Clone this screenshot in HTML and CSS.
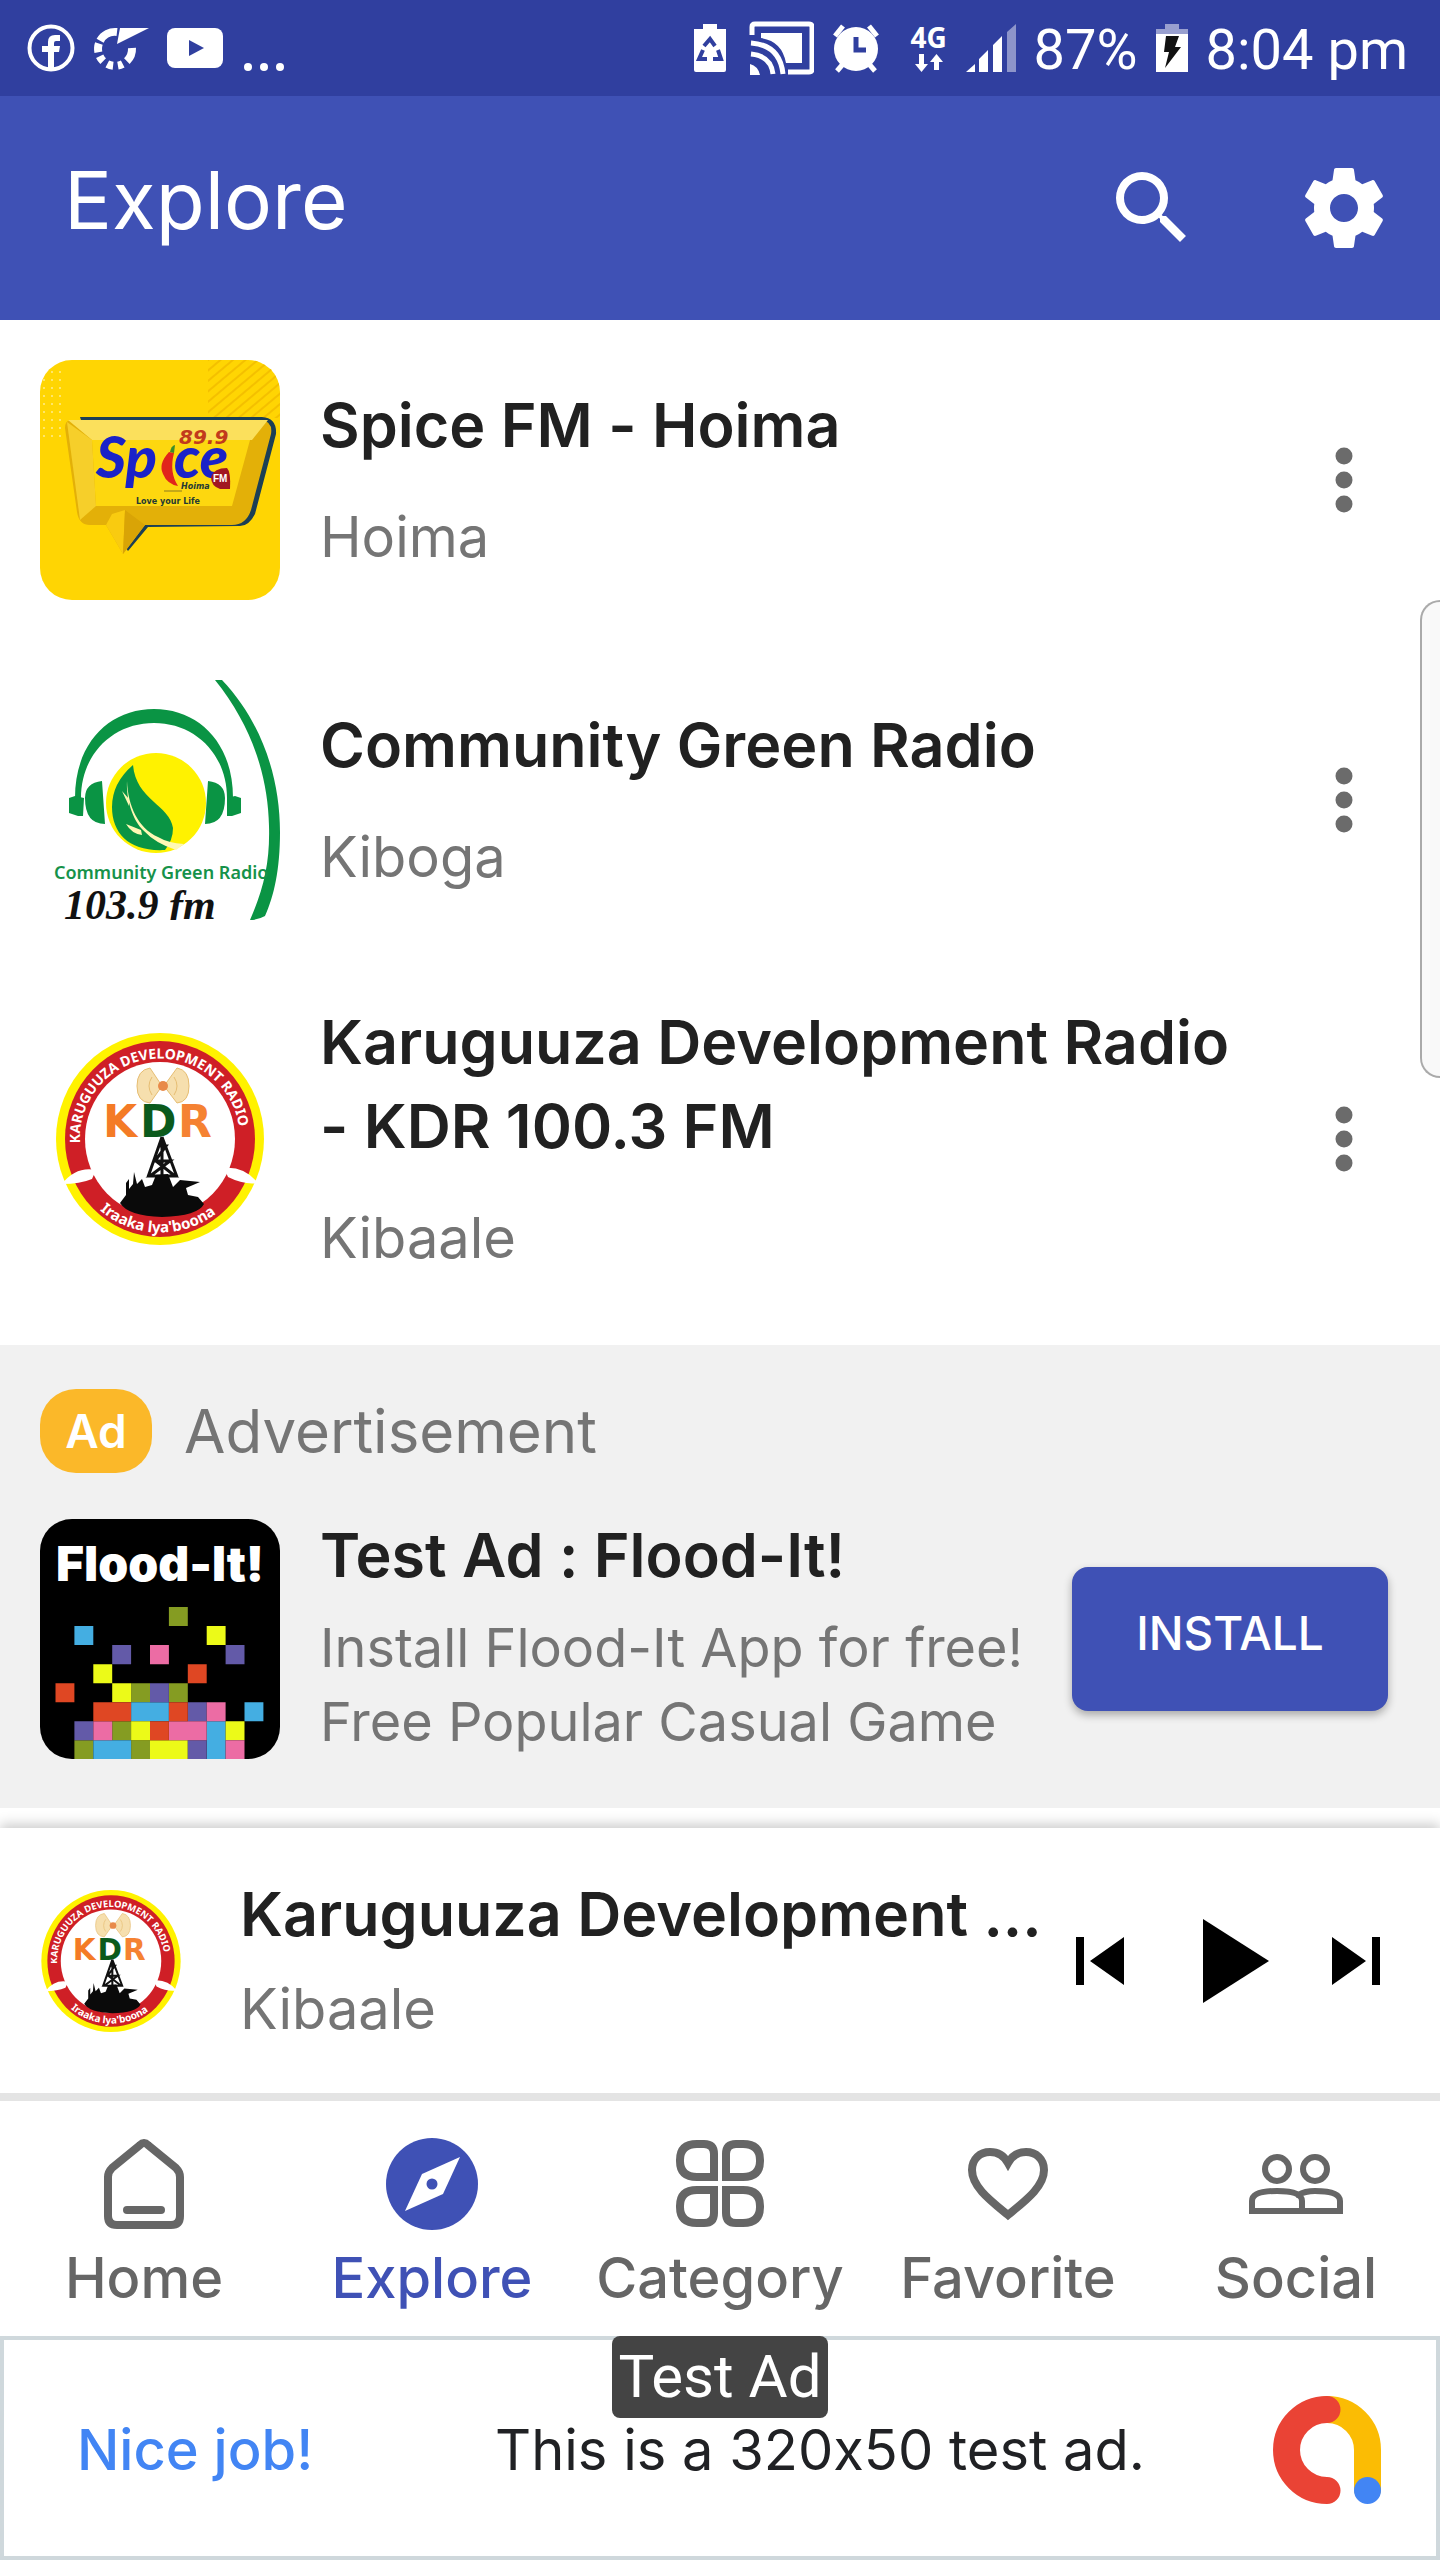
FILE: index.html
```html
<!DOCTYPE html>
<html lang="en">
<head>
<meta charset="utf-8">
<meta name="viewport" content="width=device-width, initial-scale=1">
<title>Explore</title>
<link rel="stylesheet" href="styles.css">
</head>
<body>
<svg class="defs" aria-hidden="true">
  <symbol id="more" viewBox="0 0 96 96"><g fill="#6b6b6b"><circle cx="48" cy="24" r="8.500"/><circle cx="48" cy="48" r="8.500"/><circle cx="48" cy="72" r="8.500"/></g></symbol>
  <symbol id="kdr" viewBox="0 0 240 240">
    <ellipse cx="120" cy="120" rx="104" ry="106" fill="#fff200"/>
    <ellipse cx="120" cy="120" rx="95" ry="98" fill="#cf1f26"/>
    <ellipse cx="120" cy="120" rx="75" ry="77" fill="#fff"/>
    <path d="M22 165Q36 147 56 151L52 160Q40 165 22 165ZM218 164Q204 147 184 149L188 158Q204 166 218 164Z" fill="#fff"/>
    <path id="kdr-top" d="M40 124A80 80 0 1 1 190 158" fill="none"/>
    <path id="kdr-bottom" d="M54 186A93 93 0 0 0 188 184" fill="none"/>
    <text class="kdr-ring"><textPath href="#kdr-top">KARUGUUZA DEVELOPMENT RADIO</textPath></text>
    <text class="kdr-ring kdr-motto"><textPath href="#kdr-bottom" startOffset="8">Iraaka lya'boona</textPath></text>
    <g fill="#f6dfae" stroke="#e6bd72"><path d="M122 67L110 49Q97 51 97 67T110 84ZM124 67L137 49Q149 51 149 67T137 84Z"/><path d="M112 58Q106 67 112 76M134 58Q140 67 134 76" fill="none"/></g>
    <circle cx="123" cy="67" r="5" fill="#e88a4a"/>
    <text class="kdr-name" y="118"><tspan x="63" fill="#f47b26">K</tspan><tspan x="100" fill="#0b5a1c">D</tspan><tspan x="138" fill="#f58232">R</tspan></text>
    <path d="M122 118L108 158M122 118L137 158M119 127H126L115 142H130L110 157H135L116 142M122 120V160" fill="none" stroke="#111" stroke-width="3"/>
    <path d="M80 184L86 176V164L89 160V170L93 165L94 153L97 165L102 160L105 168L112 166L116 156L128 155L133 168L140 161L160 163L146 169L148 176L158 178L164 185Q158 197 122 198Q88 197 80 184Z" fill="#0a0a0a"/>
  </symbol>
</svg>

<div class="status">
  <div class="status-group">
    <svg width="48" height="48" viewBox="0 0 48 48"><circle cx="24" cy="24" r="21.500" fill="none" stroke="#fff" stroke-width="4"/><path d="M21 46V28H15V22H21V18Q21 11 28 11H33V17H29Q27 17 27 19V22H33L32 28H27V46Z" fill="#fff"/></svg>
    <svg width="56" height="48" viewBox="0 0 56 48"><path d="M30 4H56L24 20L27 4Z" fill="#fff"/><path d="M24 8A17 17 0 1 0 39 24" fill="none" stroke="#fff" stroke-width="8" stroke-dasharray="20 3 9 4 6 5 6 5 5 5"/></svg>
    <svg width="56" height="48" viewBox="0 0 56 48"><rect y="4" width="56" height="40" rx="8" fill="#fff"/><path d="M22 16L37 24L22 32Z" fill="#303f9f"/></svg>
    <svg width="48" height="48" viewBox="0 0 48 48"><g fill="#fff"><circle cx="7" cy="43" r="4"/><circle cx="23" cy="43" r="4"/><circle cx="39" cy="43" r="4"/></g></svg>
  </div>
  <div class="status-group">
    <svg width="32" height="48" viewBox="0 0 32 48"><path d="M9 0H23V5H32V46Q32 48 30 48H2Q0 48 0 46V5H9Z" fill="#fff"/><path d="M10 22L16 15L21 22M24 26L27 35H19M13 35H5L9 26" fill="none" stroke="#303f9f" stroke-width="4"/></svg>
    <svg width="70" height="54" viewBox="-6 0 70 54"><path d="M2 14V6Q2 3 5 3H59Q62 3 62 6V48Q62 51 59 51H38" fill="none" stroke="#fff" stroke-width="5"/><path d="M11 12H52V42H36Q32 20 11 17Z" fill="#fff"/><path d="M1 22Q30 24 33 53M1 33Q21 35 23 53" fill="none" stroke="#fff" stroke-width="5"/><path d="M0 43Q8 45 10 54H0Z" fill="#fff"/></svg>
    <svg width="48" height="50" viewBox="0 0 48 50"><circle cx="24" cy="26" r="22" fill="#fff"/><path d="M3 13L11 3M45 13L37 3M5 48L11 41M43 48L37 41" stroke="#fff" stroke-width="5"/><path d="M24 14V27H34" fill="none" stroke="#303f9f" stroke-width="5"/></svg>
    <div class="network"><span>4G</span><svg width="30" height="18" viewBox="0 0 30 18"><path d="M5 0H10V10H14L7.500 18L1 10H5ZM20 16H25V8H29L22.500 0L16 8H20Z" fill="#fff"/></svg></div>
    <svg width="50" height="48" viewBox="0 0 50 48"><path d="M0 48L9 40V48ZM13 35L22 26V48H13ZM27 21L36 12V48H27Z" fill="#fff"/><path d="M41 8L50 0V48H41Z" fill="#fff" opacity=".45"/></svg>
    <span class="clock">87%</span>
    <svg width="32" height="48" viewBox="0 0 32 48"><path d="M9 0H23V5H32V10H0V5H9Z" fill="#fff" opacity=".5"/><path d="M0 10H32V48H0Z" fill="#fff"/><path d="M10 12H23L19 23H25L9 44L13 28H8Z" fill="#111"/></svg>
    <span class="clock">8:04 pm</span>
  </div>
</div>

<header class="appbar">
  <h1>Explore</h1>
  <button class="icon-btn" aria-label="Search"><svg viewBox="0 0 24 24" fill="#fff"><path d="M15.500 14h-.79l-.28-.27A6.470 6.470 0 0 0 16 9.500 6.500 6.500 0 1 0 9.500 16c1.610 0 3.090-.59 4.230-1.570l.27.28v.79l5 4.990L20.490 19l-4.990-5zm-6 0C7.010 14 5 11.990 5 9.500S7.010 5 9.500 5 14 7.010 14 9.500 11.990 14 9.500 14z"/></svg></button>
  <button class="icon-btn" aria-label="Settings"><svg viewBox="0 0 24 24" fill="#fff"><path d="M19.430 12.980c.04-.32.07-.64.07-.98s-.03-.66-.07-.98l2.110-1.650c.19-.15.24-.42.12-.64l-2-3.460c-.12-.22-.39-.3-.61-.22l-2.490 1c-.52-.4-1.080-.73-1.690-.98l-.38-2.650C14.460 2.180 14.250 2 14 2h-4c-.25 0-.46.18-.49.42l-.38 2.650c-.61.25-1.170.59-1.690.98l-2.490-1c-.23-.09-.49 0-.61.22l-2 3.460c-.13.22-.07.49.12.64l2.110 1.650c-.04.32-.07.65-.07.98s.03.66.07.98l-2.110 1.650c-.19.15-.24.42-.12.64l2 3.460c.12.22.39.3.61.22l2.490-1c.52.4 1.080.73 1.690.98l.38 2.650c.03.24.24.42.49.42h4c.25 0 .46-.18.49-.42l.38-2.650c.61-.25 1.170-.59 1.690-.98l2.490 1c.23.09.49 0 .61-.22l2-3.460c.12-.22.07-.49-.12-.64l-2.110-1.650zM12 15.500c-1.930 0-3.500-1.570-3.500-3.500s1.570-3.500 3.500-3.500 3.500 1.570 3.500 3.500-1.570 3.500-3.500 3.500z"/></svg></button>
</header>

<main class="content">
  <ul class="stations">
    <li class="station">
      <svg class="cover" viewBox="0 0 240 240" role="img" aria-label="Spice FM logo">
        <defs>
          <pattern id="dots" width="8" height="8" patternUnits="userSpaceOnUse"><circle cx="4" cy="4" r="1" fill="#ffec8c"/></pattern>
          <pattern id="lines" width="8" height="8" patternUnits="userSpaceOnUse" patternTransform="rotate(-40)"><path d="M0 4H8" stroke="#f4c000" stroke-width="2"/></pattern>
        </defs>
        <path d="M0 0H240V240H0Z" fill="#ffd503"/>
        <path d="M0 8H24V80H0Z" fill="url(#dots)"/><path d="M168 0H240V58H168Z" fill="url(#lines)"/>
        <path d="M40 57H222Q237 58 236 74L215 154Q209 166 200 166L108 167L88 191L80 180Z" fill="#1c3f55"/>
        <path d="M30 60H222Q233 62 231 74L211 150Q206 165 192 165H105L83 194L66 165H50Q39 165 37 152L25 68Q25 61 30 60Z" fill="#e3b008"/>
        <path d="M28 60H228L212 80H52Z" fill="#fbe05c"/><path d="M27 62L52 80L56 146L40 160Z" fill="#f6cf2a"/>
        <path d="M52 80H210L192 146H56Z" fill="#fdd70f"/><path d="M66 165L72 154L85 150L83 194Z" fill="#f9cb10"/><path d="M85 150L105 165L83 194Z" fill="#d9a406"/>
        <text class="spice-name" x="56" y="118">Sp</text><text class="spice-name" x="134" y="118">ce</text>
        <path d="M129 92Q118 104 123 114Q127 124 138 126Q129 112 134 93Z" fill="#e1251b"/><path d="M130 92Q131 86 135 85L134 93Z" fill="#3c8c28"/>
        <text class="spice-freq" x="139" y="84">89.9</text>
        <path d="M171 117Q174 108 187 108Q191 112 190 129H180Q171 126 171 117Z" fill="#a11722"/>
        <text class="spice-fm" x="173" y="122">FM</text>
        <text class="spice-small spice-town" x="141" y="129">Hoima</text>
        <path d="M124 131H142" stroke="#8d7a20"/>
        <text class="spice-small" x="96" y="144">Love your Life</text>
      </svg>
      <div class="info"><h2>Spice FM - Hoima</h2><p>Hoima</p></div>
      <button class="icon-btn" aria-label="More options"><svg><use href="#more"/></svg></button>
    </li>
    <li class="station">
      <svg class="cover cover-square" viewBox="0 0 240 240" role="img" aria-label="Community Green Radio logo">
        <g fill="#0a9444">
          <path d="M35 118C35 62 70 29 114 29S193 62 193 118H187C187 74 155 43 114 43S41 74 41 118Z"/>
          <path d="M29 118L35 116L44 118L43 136H38L29 133ZM201 118L195 116L187 118V136H192L201 133Z"/>
          <path d="M62 101Q45 103 45 118Q45 144 65 144ZM168 101Q185 103 185 118Q185 144 165 144Z"/>
          <path d="M175 0H182C222 42 240 98 240 152C240 190 234 216 225 236Q218 240 210 240C224 208 230 182 229 146C228 96 212 46 175 0Z"/>
        </g>
        <circle cx="116" cy="123" r="50" fill="#fff200"/>
        <path d="M93 85Q72 103 72 127C72 154 90 172 125 170Q133 160 133 148C130 125 96 120 93 85Z" fill="#0a9444"/>
        <path d="M87 101C88 126 98 148 118 157Q128 163 144 164L136 170Q115 163 104 151C92 140 86 118 87 101ZM82 111L89 119V126ZM86 144L101 150L102 155Q92 154 86 144Z" fill="#fff8b5"/>
        <text class="green-name" x="14" y="199">Community Green Radio</text>
        <text class="green-freq" x="24" y="239">103.9 fm</text>
      </svg>
      <div class="info"><h2>Community Green Radio</h2><p>Kiboga</p></div>
      <button class="icon-btn" aria-label="More options"><svg><use href="#more"/></svg></button>
    </li>
    <li class="station">
      <svg class="cover cover-square" role="img" aria-label="Karuguuza Development Radio logo"><use href="#kdr"/></svg>
      <div class="info"><h2>Karuguuza Development Radio<br>- KDR 100.3 FM</h2><p>Kibaale</p></div>
      <button class="icon-btn" aria-label="More options"><svg><use href="#more"/></svg></button>
    </li>
  </ul>
  <section class="native-ad">
    <div class="ad-label"><span class="badge">Ad</span><span>Advertisement</span></div>
    <div class="ad-body">
      <svg class="cover" viewBox="0 0 240 240" role="img" aria-label="Flood-It!">
        <path d="M0 0H240V240H0Z"/>
        <text class="flood-name" x="16" y="62">Flood-It!</text>
        <g transform="translate(15.500 88)scale(18.900 19.050)">
          <path fill="#859c22" d="M6 0h1v1h-1zM4 4h1v1h-1zM6 4h1v1h-1zM3 6h1v1h-1zM1 7h1v1h-1zM4 7h1v1h-1z"/>
          <path fill="#44aee2" d="M1 1h1v1h-1zM4 5h2v1h-2zM10 5h1v1h-1zM8 6h1v2h-1zM2 7h2v1h-2z"/>
          <path fill="#ecfa18" d="M8 1h1v1h-1zM2 3h1v1h-1zM3 4h1v1h-1zM4 6h1v1h-1zM9 6h1v1h-1zM5 7h2v1h-2z"/>
          <path fill="#635aa8" d="M3 2h1v1h-1zM9 2h1v1h-1zM5 4h1v1h-1zM7 5h1v1h-1zM1 6h1v1h-1zM7 7h1v1h-1z"/>
          <path fill="#ec6ca4" d="M5 2h1v1h-1zM8 5h1v1h-1zM2 6h1v1h-1zM6 6h2v1h-2zM9 7h1v1h-1z"/>
          <path fill="#df4723" d="M7 3h1v1h-1zM0 4h1v1h-1zM2 5h2v1h-2zM6 5h1v1h-1zM5 6h1v1h-1z"/>
        </g>
      </svg>
      <div class="info"><h2>Test Ad : Flood-It!</h2><p>Install Flood-It App for free!<br>Free Popular Casual Game</p></div>
      <button class="install">INSTALL</button>
    </div>
  </section>
  <div class="edge-handle"></div>
</main>

<section class="player">
  <svg class="player-logo" viewBox="16 14 208 212" role="img" aria-label="Karuguuza Development Radio logo"><use href="#kdr" width="240" height="240"/></svg>
  <div class="info"><h2>Karuguuza Development ...</h2><p>Kibaale</p></div>
  <div class="controls">
    <button aria-label="Previous"><svg width="48" height="48" viewBox="0 0 48 48"><path d="M0 0H8V48H0ZM48 0V48L14 24Z"/></svg></button>
    <button class="play" aria-label="Play"><svg width="66" height="84" viewBox="0 0 66 84"><path d="M0 0L66 42L0 84Z"/></svg></button>
    <button aria-label="Next"><svg width="48" height="48" viewBox="0 0 48 48"><path d="M0 0L34 24L0 48ZM40 0H48V48H40Z"/></svg></button>
  </div>
</section>

<nav class="tabs">
  <a href="#home"><svg viewBox="0 0 96 96"><path d="M48 7Q50 7 52 9L80 32Q84 36 84 41V80Q84 89 75 89H21Q12 89 12 80V41Q12 36 16 32L44 9Q46 7 48 7Z"/><path d="M31 74H65"/></svg>Home</a>
  <a href="#explore" class="active" aria-current="page"><svg viewBox="0 0 96 96"><circle class="solid" cx="48" cy="48" r="46"/><path class="needle" d="M76 21L59 58L21 75L38 38Z"/><circle class="solid" cx="48" cy="48" r="5.500"/></svg>Explore</a>
  <a href="#category"><svg viewBox="0 0 96 96"><path d="M25 8H32Q42 8 42 18V41H25Q8 41 8 25V24Q8 8 25 8ZM64 8H71Q88 8 88 24V25Q88 41 71 41H54V18Q54 8 64 8ZM25 54H42V77Q42 87 32 87H25Q8 87 8 71V70Q8 54 25 54ZM54 54H71Q88 54 88 70V71Q88 87 71 87H64Q54 87 54 77Z"/></svg>Category</a>
  <a href="#favorite"><svg viewBox="0 0 96 96"><path d="M48 79C31 65 12 51 12 34C12 23 20 16 30 16Q42 16 48 27Q54 16 66 16C76 16 84 23 84 34C84 51 65 65 48 79Z"/></svg>Favorite</a>
  <a href="#social"><svg class="thin" viewBox="0 0 96 96"><circle cx="29" cy="33" r="12"/><circle cx="67" cy="33" r="12"/><path d="M4 75V65Q4 55 29 55T54 65V75ZM50 59Q57 55 67 55Q92 55 92 65V75H54"/></svg>Social</a>
</nav>

<aside class="banner">
  <span class="test-tag">Test Ad</span>
  <strong>Nice job!</strong>
  <span>This is a 320x50 test ad.</span>
  <svg class="admob" width="110" height="110" viewBox="0 0 110 110" fill="none" stroke-width="27" stroke-linecap="round"><path d="M54 14.500A40.500 40.500 0 0 1 94.500 55V94" stroke="#fbbc04"/><path d="M54 14.500A40.500 40.500 0 0 0 54 95.500" stroke="#ea4335"/><circle cx="94.500" cy="95.500" r="13.500" fill="#4285f4"/></svg>
</aside>
</body>
</html>
```
FILE: styles.css
```css
* { box-sizing: border-box; }
body {
  margin: 0;
  min-height: 100vh;
  display: flex;
  flex-direction: column;
  background: #fff;
  color: #212121;
  font-family: Inter, "Liberation Sans", sans-serif;
  font-variant-ligatures: no-contextual;
}
h1, h2, p, ul { margin: 0; padding: 0; font-weight: 400; }
ul { list-style: none; }
button { border: 0; padding: 0; background: none; font: inherit; color: inherit; }
svg { display: block; flex: none; }
.defs { position: absolute; width: 0; height: 0; }

.status {
  height: 96px;
  padding: 0 32px 0 27px;
  display: flex;
  align-items: center;
  justify-content: space-between;
  background: #303f9f;
  color: #fff;
}
.status-group { display: flex; align-items: center; gap: 18px; }
.clock { padding-top: 4px; font: 400 56px/72px Roboto, sans-serif; white-space: nowrap; }
.network {
  width: 50px;
  padding-left: 12px;
  display: flex;
  flex-direction: column;
  align-items: center;
  gap: 4px;
  font: 700 28px/26px "Noto Sans", sans-serif;
}

.appbar {
  height: 224px;
  padding: 0 48px 0 64px;
  display: flex;
  align-items: center;
  gap: 96px;
  background: #3f51b5;
  color: #fff;
}
.appbar h1 { flex: 1; padding-bottom: 16px; font-size: 80px; line-height: 96px; }
.icon-btn { flex: none; width: 96px; height: 96px; }
.icon-btn svg { width: 96px; height: 96px; }

.content { position: relative; }
.stations { padding-bottom: 27px; }
.station { display: flex; align-items: center; padding: 40px 48px 40px 40px; }
.cover { width: 240px; height: 240px; margin-right: 40px; border-radius: 32px; }
.cover-square { border-radius: 0; }
.info { flex: 1; min-width: 0; display: flex; flex-direction: column; gap: 30px; white-space: nowrap; }
.info h2 { font-size: 61px; line-height: 84px; font-weight: 600; }
.info p { font-size: 56px; line-height: 80px; color: #757575; }
.edge-handle {
  position: absolute;
  top: 280px;
  right: 0;
  width: 20px;
  height: 478px;
  background: #f9f9f9;
  border: 2px solid #aaa;
  border-right: 0;
  border-radius: 20px 0 0 20px;
}

.native-ad { padding: 44px 52px 49px 40px; background: #f1f1f1; }
.ad-label { display: flex; align-items: center; gap: 32px; margin-bottom: 46px; font-size: 60px; line-height: 84px; color: #757575; }
.badge {
  width: 112px;
  border-radius: 36px;
  background: #fbb829;
  color: #fff;
  font-size: 46px;
  font-weight: 600;
  text-align: center;
}
.ad-body { display: flex; align-items: center; }
.ad-body .info { gap: 20px; }
.ad-body .info h2 { line-height: 72px; }
.ad-body .info p { font-size: 54px; line-height: 74px; }
.install {
  width: 316px;
  height: 144px;
  padding-bottom: 12px;
  border-radius: 16px;
  background: #3f51b5;
  box-shadow: 0 4px 8px rgba(0, 0, 0, .3);
  color: #fff;
  font-size: 46px;
  font-weight: 500;
}

.player {
  margin-top: 20px;
  height: 273px;
  padding: 0 60px 0 41px;
  display: flex;
  align-items: center;
  border-bottom: 8px solid #e4e4e4;
  box-shadow: 0 -4px 12px rgba(0, 0, 0, .2);
}
.player-logo { width: 140px; height: 142px; margin-right: 59px; }
.player .info { gap: 13px; }
.controls { display: flex; align-items: center; justify-content: space-between; width: 304px; }
.play { margin-left: 16px; }

.tabs { display: grid; grid-template-columns: repeat(5, 1fr); padding: 35px 0 22px; background: #fff; }
.tabs a {
  display: flex;
  flex-direction: column;
  align-items: center;
  gap: 10px;
  color: #666;
  font-size: 56px;
  line-height: 72px;
  font-weight: 500;
  text-decoration: none;
}
.tabs .active { color: #3f51b5; }
.tabs svg { width: 96px; height: 96px; fill: none; stroke: currentColor; stroke-width: 8px; stroke-linecap: round; }
.tabs .thin { stroke-width: 6px; }
.tabs .solid { fill: currentColor; stroke: none; }
.tabs .needle { fill: #fff; stroke: none; }

.banner {
  position: relative;
  height: 224px;
  padding: 4px 53px 0 73px;
  display: flex;
  align-items: center;
  border: 4px solid #cfd8dc;
  color: #202124;
  font-size: 56px;
  white-space: nowrap;
}
.banner strong { width: 418px; color: #4285f4; font-weight: 500; }
.admob { margin-left: auto; }
.test-tag {
  position: absolute;
  top: -4px;
  left: 50%;
  width: 216px;
  margin-left: -108px;
  border-radius: 8px;
  background: #444;
  color: #fff;
  font: 400 60px/82px Roboto, sans-serif;
  text-align: center;
}

.spice-name { font: italic 900 58px Lato, sans-serif; fill: #1a22c8; }
.spice-freq { font: italic 700 20px "DejaVu Sans", sans-serif; fill: #c23a1c; }
.spice-fm { font: 700 10px "Liberation Sans", sans-serif; fill: #fff; }
.spice-small { font: 700 8px "DejaVu Sans", sans-serif; fill: #253a35; }
.spice-town { font-style: italic; }
.green-name { font: 600 18px "Noto Sans", sans-serif; fill: #16924a; }
.green-freq { font: italic 700 42px "Liberation Serif", serif; fill: #111; }
.kdr-ring { font: 700 14px "Noto Sans", sans-serif; fill: #fff; }
.kdr-motto { font-size: 15px; }
.kdr-name { font: 700 44px "DejaVu Sans", sans-serif; }
.flood-name { font: 900 48px Inter, sans-serif; fill: #fff; }
```
